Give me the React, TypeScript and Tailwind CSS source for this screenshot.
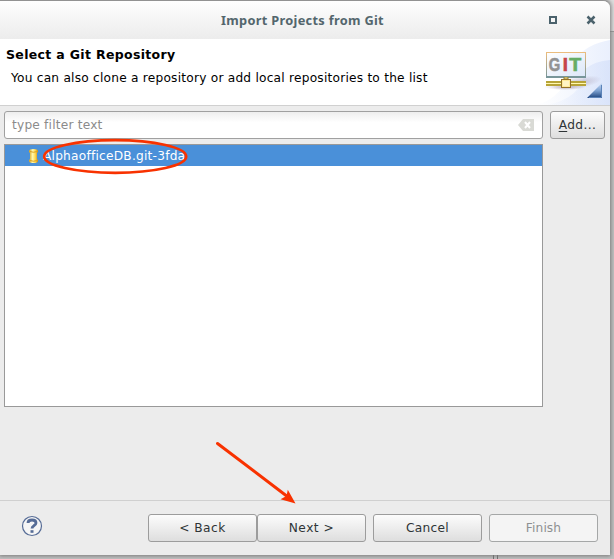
import type { ReactNode } from "react";

function Button({ children, className = "", disabled = false }: { children: ReactNode; className?: string; disabled?: boolean }) {
  return (
    <button
      disabled={disabled}
      className={`h-7 shrink-0 rounded-[3px] border pb-px text-center tracking-[0.1px] whitespace-nowrap ${
        disabled
          ? "border-[#a5a7a7] bg-[#f4f4f4] text-[#8d9091]"
          : "border-[#9c9c9c] bg-linear-to-b from-[#fcfcfc] to-[#dedede] text-[#2e3436]"
      } ${className}`}
    >
      {children}
    </button>
  );
}

function GitBanner() {
  return (
    <svg width="75" height="66" viewBox="0 0 75 66" className="block shrink-0" aria-label="Git">
      <defs>
        <linearGradient id="sky" x1="0" y1="0" x2="1" y2="0">
          <stop offset="0" stopColor="#fff" />
          <stop offset="1" stopColor="#eaf0fd" />
        </linearGradient>
        <linearGradient id="swoosh" x1="0" y1="0" x2="1" y2="0">
          <stop offset="0" stopColor="#d7e2fb" stopOpacity="0" />
          <stop offset="1" stopColor="#d3dff9" stopOpacity="0.7" />
        </linearGradient>
        <linearGradient id="frame" gradientUnits="userSpaceOnUse" x1="0" y1="13" x2="0" y2="38">
          <stop offset="0" stopColor="#edbd7d" />
          <stop offset="1" stopColor="#78969a" />
        </linearGradient>
        <linearGradient id="face" x1="0" y1="0" x2="1" y2="1">
          <stop offset="0" stopColor="#fff" />
          <stop offset="1" stopColor="#dce7f8" />
        </linearGradient>
        <linearGradient id="corner" x1="0" y1="0" x2="0" y2="1">
          <stop offset="0" stopColor="#c5daf5" />
          <stop offset="0.5" stopColor="#7fa3d2" />
          <stop offset="1" stopColor="#1c437e" />
        </linearGradient>
        <radialGradient id="shade">
          <stop offset="0" stopColor="#8c7890" stopOpacity="0.45" />
          <stop offset="1" stopColor="#8c7890" stopOpacity="0" />
        </radialGradient>
      </defs>
      <rect width="75" height="66" fill="#fff" />
      <path d="M40 20Q52 5 75 1V66H0Q30 60 40 20Z" fill="url(#sky)" />
      <path d="M50 30Q60 22 75 21V66H10Q48 60 50 30Z" fill="url(#swoosh)" />
      <ellipse cx="42" cy="44" rx="25" ry="6" fill="url(#shade)" transform="rotate(-10 42 44)" />
      <ellipse cx="30" cy="48" rx="21" ry="3" fill="url(#shade)" />
      <rect x="11.5" y="13.5" width="39" height="24" fill="url(#face)" stroke="url(#frame)" />
      <path d="M11 38H51" stroke="#78969a" strokeWidth="2" />
      <g fontFamily="Liberation Sans, sans-serif" fontSize="17.5" fontWeight="bold" strokeWidth="0.6">
        <text x="13.8" y="32.4" fill="#929292" stroke="#929292" textLength="11.5" lengthAdjust="spacingAndGlyphs">G</text>
        <text x="27.8" y="32.4" fill="#c6444b" stroke="#c6444b" textLength="5.2" lengthAdjust="spacingAndGlyphs">I</text>
        <text x="34.3" y="32.4" fill="#65ad66" stroke="#65ad66" textLength="12" lengthAdjust="spacingAndGlyphs">T</text>
      </g>
      <path d="M11 44.5H51" stroke="#b8a437" strokeWidth="5" />
      <path d="M11 44.5H51" stroke="#fff8b0" />
      <path d="M29 38v3h4v-3" fill="#c7b45f" stroke="#87783d" />
      <rect x="26.5" y="40.5" width="9" height="8" fill="#ffe99b" stroke="#93712a" />
      <path d="M28 42h6v5h-6z" fill="#fff3c4" />
      <path d="M67 44v15H52z" fill="url(#corner)" />
      <path d="M66.5 46v12.5H54" fill="none" stroke="#5c83b8" />
    </svg>
  );
}

export default function App() {
  return (
    <div className="relative h-[559px] w-[614px] overflow-hidden bg-[#c3c3c3] font-['DejaVu_Sans','Liberation_Sans',sans-serif] text-[12.2px] leading-4 text-black">
      <div className="absolute top-0 right-0 h-8 w-8 border-b border-[#999] bg-[#dedede]" />
      <div className="absolute bottom-0 left-[493px] h-1 w-[5px] border-x border-[#6d6d6d]" />
      <main className="relative flex h-[555px] w-[610px] flex-col rounded-tr-[7px] border-t border-[#929292] bg-[#ececec] shadow-[0_0_4px_1px_#777]">
        <header className="flex h-[38px] shrink-0 items-center rounded-tr-[7px] bg-linear-to-b from-[#fefefe] to-[#ececec] pl-[221px]">
          <h1 className="w-[327px] font-['Noto_Sans'] text-[12.8px] font-bold tracking-[0.3px] whitespace-nowrap text-[#53666d]">Import Projects from Git</h1>
          <svg width="62" height="12" viewBox="0 0 62 12" fill="none" stroke="#4b626c">
            <path d="M2 3H8V9H2Z" strokeWidth="2" />
            <path d="M39.5 2.5l7 7m0-7l-7 7" strokeWidth="2.5" />
          </svg>
        </header>
        <section className="flex h-[67px] shrink-0 justify-between overflow-hidden border-b border-[#d0d0d0] bg-white">
          <div className="pt-2 pl-[6px] whitespace-nowrap">
            <h2 className="text-[12.5px] font-bold tracking-[0.33px]">Select a Git Repository</h2>
            <p className="mt-[7px] pl-[5px] tracking-[0.22px]">You can also clone a repository or add local repositories to the list</p>
          </div>
          <GitBanner />
        </section>
        <section className="px-1 pt-[5px]">
          <div className="flex gap-[7px]">
            <div className="flex h-7 w-[539px] items-center justify-between rounded-[3px] border border-[#a0a0a0] bg-linear-to-b from-[#eeeeee] to-white to-40% pr-2 pb-px pl-[7px] text-[#8b8b8b]">
              <span className="tracking-[0.2px]">type filter text</span>
              <svg width="16" height="12" viewBox="0 0 16 12">
                <path d="M0 6L5 0H16V12H5Z" fill="#d9dad5" />
                <path d="M7 3l5 6m0-6L7 9" stroke="#fff" strokeWidth="2" />
              </svg>
            </div>
            <Button className="w-[55px] tracking-[0.4px]"><span className="underline underline-offset-2">A</span>dd...</Button>
          </div>
          <div className="mt-[5px] h-[263px] w-[539px] border border-[#999] bg-white">
            <div className="flex h-[21px] items-center bg-[#4a90d9] pl-6 text-white">
              <svg width="9" height="14" viewBox="0 0 9 14">
                <defs><linearGradient id="gold"><stop stopColor="#d79e14" /><stop offset=".4" stopColor="#fffab0" /><stop offset=".7" stopColor="#ffd850" /><stop offset="1" stopColor="#cf8c0b" /></linearGradient></defs>
                <path d="M0 2Q0 0 4.5 0T9 2V3L8 4V10L9 11V12Q9 14 4.5 14T0 12V11L1 10V4L0 3Z" fill="url(#gold)" />
                <path d="M1 2.5Q4.5 4 8 2.5M1 11.5Q4.5 13 8 11.5" fill="none" stroke="#dca11e" />
              </svg>
              <span className="ml-[5px] tracking-[0.22px]">AlphaofficeDB.git-3fda</span>
            </div>
          </div>
        </section>
        <footer className="mt-auto flex h-[55px] shrink-0 items-start border-t border-[#d0d0d0] pt-[13px] pl-[21px]">
          <svg width="22" height="22" viewBox="0 0 22 22" className="mt-px mr-[105px]" fill="none" stroke="#566c96">
            <circle cx="11" cy="11" r="9.5" fill="#f5f5f5" strokeWidth="1.2" />
            <path d="M7 8Q7 5 11 5Q15 5 15 8Q15 9.5 12.8 10.8Q11 12 11 13.5" strokeWidth="2.8" />
            <path d="M11 15.2v2.6" strokeWidth="3" />
          </svg>
          <Button className="w-[109px]"><span className="tracking-[0.5px]">&lt; Back</span></Button>
          <Button className="mr-[7px] w-[109px]"><span className="tracking-[0.5px]">Next &gt;</span></Button>
          <Button className="mr-[7px] w-[109px]"><span className="tracking-[0.3px]">Cancel</span></Button>
          <Button className="w-[109px]" disabled>Finish</Button>
        </footer>
      </main>
      <svg width="614" height="559" viewBox="0 0 614 559" className="pointer-events-none absolute inset-0">
        <ellipse cx="115.2" cy="156.5" rx="71" ry="16.3" fill="none" stroke="#f83200" strokeWidth="2.7" />
        <path d="M217.5 443.5L288 497" stroke="#f83200" strokeWidth="3" strokeLinecap="round" />
        <path d="M295.5 503.5L287.8 489.8L286.5 496L280.5 499.3Z" fill="#f83200" />
      </svg>
    </div>
  );
}
